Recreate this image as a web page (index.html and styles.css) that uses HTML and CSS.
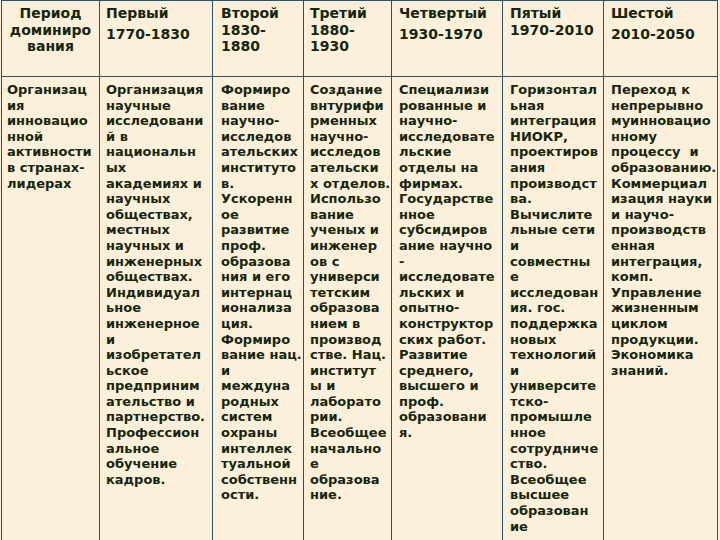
FILE: index.html
```html
<!DOCTYPE html>
<html lang="ru">
<head>
<meta charset="utf-8">
<title>Периоды доминирования</title>
<link rel="stylesheet" href="styles.css">
</head>
<body>
<div class="grid">
  <div class="cell head center">Период<br>доминиро<br>вания</div>
  <div class="cell head c2">Первый<span class="yr gap">1770-1830</span></div>
  <div class="cell head c3">Второй<br>1830-<br>1880</div>
  <div class="cell head">Третий<br>1880-<br>1930</div>
  <div class="cell head c5">Четвертый<span class="yr gap">1930-1970</span></div>
  <div class="cell head c5">Пятый<span class="yr">1970-2010</span></div>
  <div class="cell head c5">Шестой<span class="yr gap">2010-2050</span></div>

  <div class="cell body c1">Организац<br>ия<br>инновацио<br>нной<br>активности<br>в странах-<br>лидерах</div>
  <div class="cell body c2">Организация<br>научные<br>исследовани<br>й в<br>национальн<br>ых<br>академиях и<br>научных<br>обществах,<br>местных<br>научных и<br>инженерных<br>обществах.<br>Индивидуал<br>ьное<br>инженерное<br>и<br>изобретател<br>ьское<br>предприним<br>ательство и<br>партнерство.<br>Профессион<br>альное<br>обучение<br>кадров.</div>
  <div class="cell body c3">Формиро<br>вание<br>научно-<br>исследов<br>ательских<br>институто<br>в.<br>Ускоренн<br>ое<br>развитие<br>проф.<br>образова<br>ния и его<br>интернац<br>ионализа<br>ция.<br>Формиро<br>вание нац.<br>и<br>междуна<br>родных<br>систем<br>охраны<br>интеллек<br>туальной<br>собственн<br>ости.</div>
  <div class="cell body">Создание<br>внтурифи<br>рменных<br>научно-<br>исследов<br>ательски<br>х отделов.<br>Использо<br>вание<br>ученых и<br>инженер<br>ов с<br>универси<br>тетским<br>образова<br>нием в<br>производ<br>стве. Нац.<br>институт<br>ы и<br>лаборато<br>рии.<br>Всеобщее<br>начально<br>е<br>образова<br>ние.</div>
  <div class="cell body c5">Специализи<br>рованные и<br>научно-<br>исследовате<br>льские<br>отделы на<br>фирмах.<br>Государстве<br>нное<br>субсидиров<br>ание научно<br>-<br>исследовате<br>льских и<br>опытно-<br>конструктор<br>ских работ.<br>Развитие<br>среднего,<br>высшего и<br>проф.<br>образовани<br>я.</div>
  <div class="cell body c5">Горизонтал<br>ьная<br>интеграция<br>НИОКР,<br>проектиров<br>ания<br>производст<br>ва.<br>Вычислите<br>льные сети<br>и<br>совместны<br>е<br>исследован<br>ия. гос.<br>поддержка<br>новых<br>технологий<br>и<br>университе<br>тско-<br>промышле<br>нное<br>сотрудниче<br>ство.<br>Всеобщее<br>высшее<br>образован<br>ие</div>
  <div class="cell body c5">Переход к<br>непрерывно<br>муинновацио<br>нному<br>процессу&nbsp; и<br>образованию.<br>Коммерциал<br>изация науки<br>и научо-<br>производств<br>енная<br>интеграция,<br>комп.<br>Управление<br>жизненным<br>циклом<br>продукции.<br>Экономика<br>знаний.</div>
</div>
</body>
</html>
```

FILE: styles.css
```css
html, body {
  margin: 0;
  padding: 0;
  background: #fcf0da;
}

body {
  width: 720px;
  height: 540px;
  overflow: hidden;
  font-family: "DejaVu Sans", "Liberation Sans", sans-serif;
  font-weight: bold;
  color: #16260e;
}

.grid {
  display: grid;
  grid-template-columns: 98px 113px 91px 88px 111px 101px 114px;
  grid-template-rows: 76px 464px;
  margin-left: 1px;
  width: max-content;
  border-left: 1px solid #2b5262;
  border-top: 1px solid #2b5262;
  background: #fcf0da;
}

.cell {
  box-sizing: border-box;
  border-right: 1px solid #2b5262;
  border-bottom: 1px solid #2b5262;
  white-space: nowrap;
  padding-left: 6px;
  overflow: hidden;
}

.head {
  font-size: 14px;
  line-height: 16.5px;
  padding-top: 4px;
}

.head.center {
  text-align: center;
  padding-left: 0;
}

.body {
  font-size: 13px;
  line-height: 15.6px;
  padding-top: 5px;
}

.c1 { padding-left: 5px; }
.c2 { padding-left: 6px; }
.c3 { padding-left: 8px; }
.c5 { padding-left: 7px; }

.yr {
  display: block;
}

.yr.gap {
  margin-top: 4px;
}
```
